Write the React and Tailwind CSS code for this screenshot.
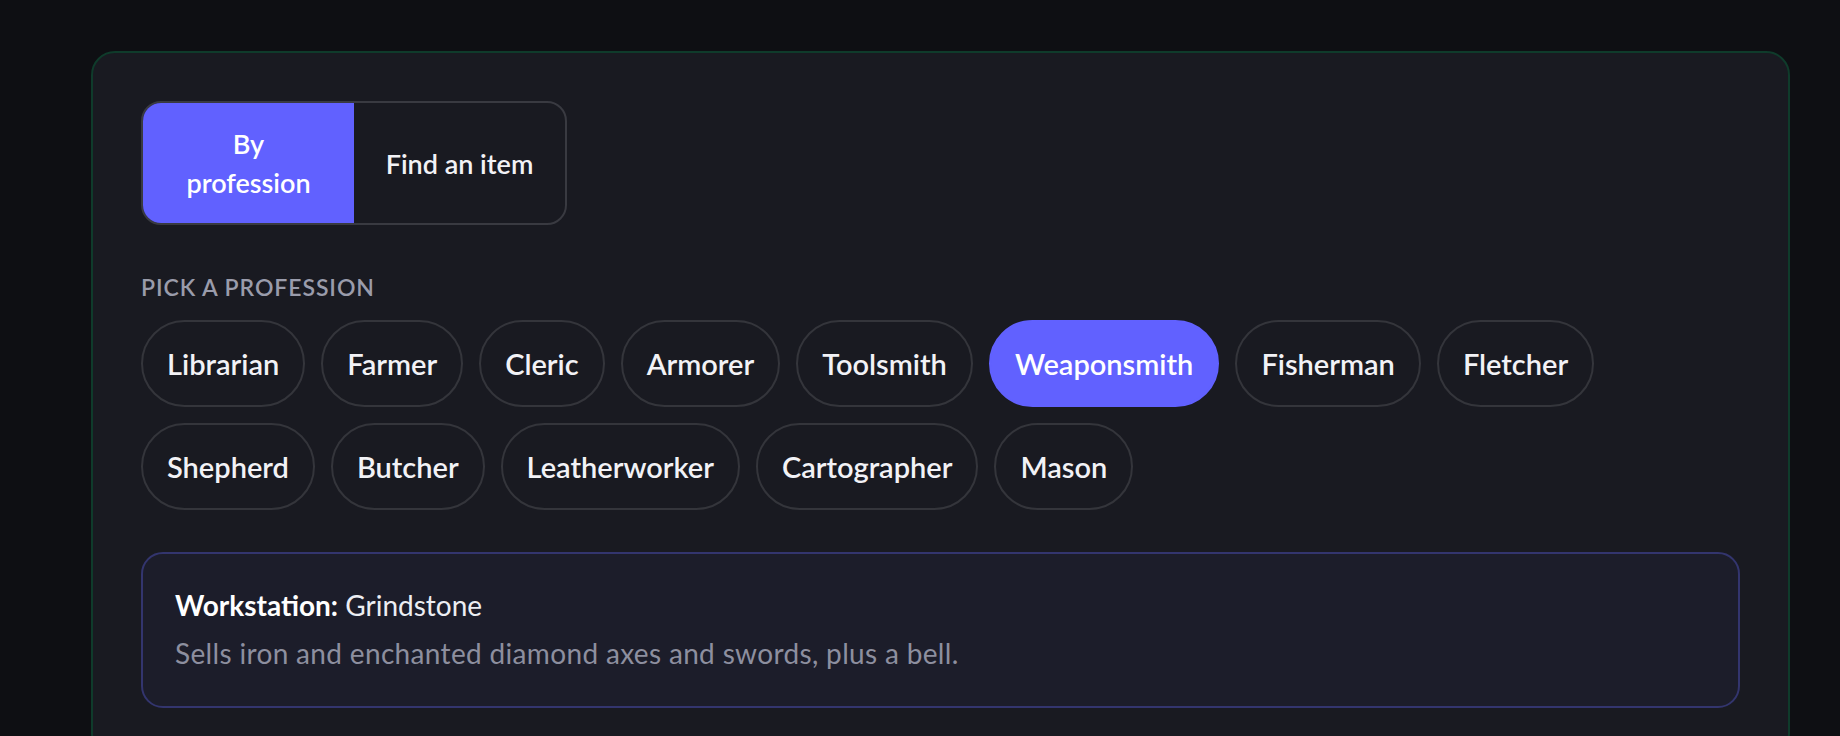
import React, { useState } from "react";

const PROFESSIONS = [
  "Librarian",
  "Farmer",
  "Cleric",
  "Armorer",
  "Toolsmith",
  "Weaponsmith",
  "Fisherman",
  "Fletcher",
  "Shepherd",
  "Butcher",
  "Leatherworker",
  "Cartographer",
  "Mason",
];

const INFO = {
  Weaponsmith: {
    station: "Grindstone",
    text: "Sells iron and enchanted diamond axes and swords, plus a bell.",
  },
};

export default function App() {
  const [mode, setMode] = useState("profession");
  const [selected, setSelected] = useState("Weaponsmith");
  const info = INFO[selected] || INFO.Weaponsmith;

  return (
    <div
      className="min-h-screen bg-[#0e0f13] pt-[51px] pl-[91px] pr-[50px] text-[#f2f2f6]"
      style={{ fontFamily: "Lato, 'Noto Sans', sans-serif" }}
    >
      <div className="rounded-[24px] border-2 border-[#0f3b2b] bg-[#191a21] px-[48px] pt-[48px] pb-[48px]">
        {/* mode switch */}
        <div className="inline-flex overflow-hidden rounded-[20px] border-2 border-[#393a41]">
          <button
            onClick={() => setMode("profession")}
            className={`w-[211px] py-[21px] text-[27px] leading-[39px] font-semibold ${
              mode === "profession" ? "bg-[#6161ff] text-white" : "text-[#f2f2f6]"
            }`}
          >
            By
            <br />
            profession
          </button>
          <button
            onClick={() => setMode("item")}
            className={`w-[211px] py-[21px] text-[27px] leading-[39px] font-semibold ${
              mode === "item" ? "bg-[#6161ff] text-white" : "text-[#f2f2f6]"
            }`}
          >
            Find an item
          </button>
        </div>

        <div className="mt-[46px] text-[23px] leading-[32px] font-semibold uppercase tracking-[0.04em] text-[#9a9cab]">
          Pick a profession
        </div>

        <div className="mt-[17px] flex flex-wrap gap-[16px]">
          {PROFESSIONS.map((p) => {
            const active = p === selected;
            return (
              <button
                key={p}
                onClick={() => setSelected(p)}
                className={`h-[87px] rounded-full border-2 px-[24px] text-[29px] font-semibold ${
                  active
                    ? "border-[#6161ff] bg-[#6161ff] text-white"
                    : "border-[#34353b] text-[#f2f2f6]"
                }`}
              >
                {p}
              </button>
            );
          })}
        </div>

        <div className="mt-[42px] rounded-[22px] border-2 border-[#33356e] bg-[#1c1d2a] px-[32px] pt-[31px] pb-[33px]">
          <div className="text-[28px] leading-[40px] text-[#eceef3]">
            <span className="font-bold text-white">Workstation:</span> {info.station}
          </div>
          <div className="mt-[8px] text-[28px] leading-[40px] tracking-[0.012em] text-[#8d8f9f]">
            {info.text}
          </div>
        </div>
      </div>
    </div>
  );
}
